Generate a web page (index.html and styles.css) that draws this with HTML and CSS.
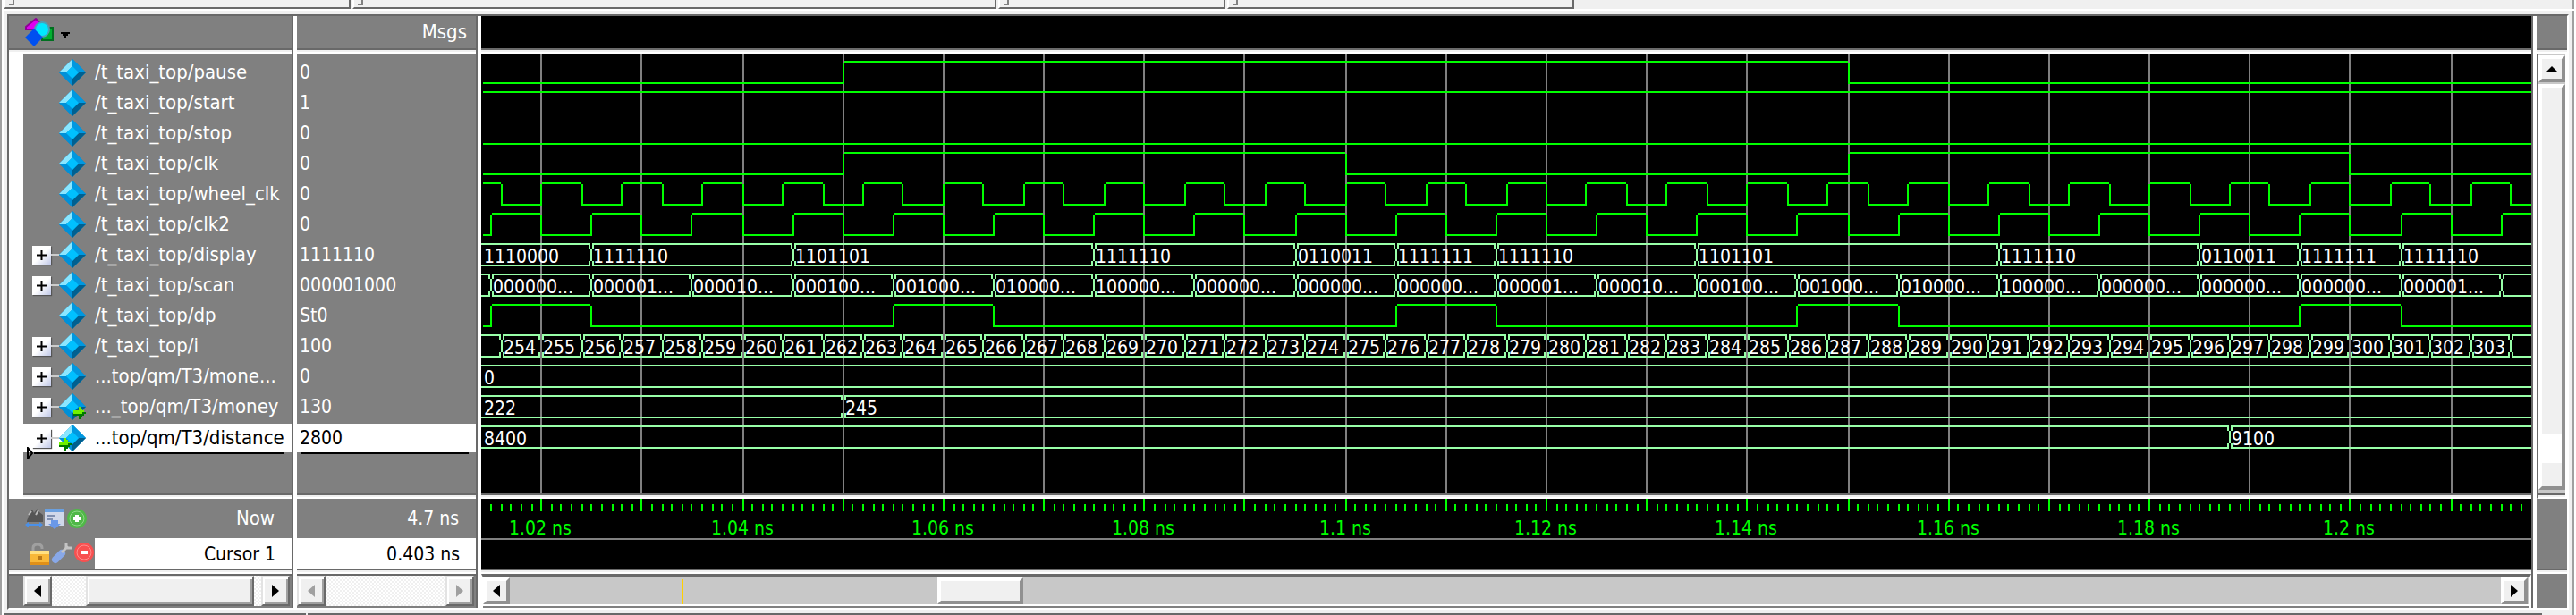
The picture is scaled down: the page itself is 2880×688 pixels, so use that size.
FILE: index.html
```html
<!DOCTYPE html>
<html lang="en">
<head>
<meta charset="utf-8">
<title>Wave</title>
<link rel="stylesheet" href="styles.css">
</head>
<body>
<svg class="defs" aria-hidden="true">
  <symbol id="diamond" viewBox="0 0 30 30">
    <path d="M15 0L30 15L15 30L0 15Z" fill="#0088cc"/>
    <path d="M15 0V8L8 15H0Z" fill="#8ae6ff"/>
    <path d="M15 0L30 15H22L15 8Z" fill="#0098e0"/>
    <path d="M0 15H8L15 22V30Z" fill="#0090d8"/>
    <path d="M30 15H22L15 22V30Z" fill="#006090"/>
    <path d="M15 8L22 15L15 22L8 15Z" fill="#00c0ff"/>
  </symbol>
  <symbol id="go" viewBox="0 0 14 14">
    <path d="M0 4H6V0H8V2H10V4H12V6H14V8H12V10H10V12H8V14H6V10H0Z" fill="#007800"/>
    <path d="M0 4H6V0H8V2H10V4H12V6H10V8H0Z" fill="#70f000"/>
  </symbol>
</svg>
<div class="toolbars">
  <div class="toolbar bar-a"><i class="grip"></i></div>
  <div class="toolbar bar-b"><i class="grip"></i></div>
  <div class="toolbar bar-c"><i class="grip"></i></div>
  <div class="toolbar bar-d"><i class="grip"></i></div>
</div>
<main class="wave-window">
  <section class="column names">
    <header class="head">
      <button class="menu" aria-label="Objects">
        <svg width="54" height="34" viewBox="0 0 54 34">
          <path d="M12 1L19 8V13H1V10Z" fill="#e000f0" stroke="#900098" stroke-width="2"/>
          <rect x="19" y="11" width="12" height="14" fill="#00b030" stroke="#007020" stroke-width="2"/>
          <circle cx="19" cy="13" r="8" fill="#00e8ff" stroke="#4aa0b8" stroke-width="2"/>
          <path d="M10 12L20 22L10 32L0 22Z" fill="#0050f0"/>
          <path d="M40 16H50V18H48V20H46V22H44V20H42V18H40Z" fill="#000"/>
        </svg>
      </button>
    </header>
    <div class="body" id="names"></div>
    <div class="times">
      <div class="now">
        <svg class="tools-now" width="70" height="24" viewBox="0 0 70 24">
          <path d="M2 15L5 6L8 2L10 6L14 1L16 5L20 8V16H2Z" fill="#555"/>
          <path d="M4 8L7 4M12 8L15 3" stroke="#bbb" stroke-width="2"/>
          <path d="M0 19L4 16V18H16V16L20 19L16 22V20H4V22Z" fill="#4a90e8"/>
          <rect x="22" y="1" width="22" height="19" fill="#d0d8ea"/>
          <rect x="22" y="1" width="22" height="4" fill="#6aa0e0"/>
          <path d="M25 9H33M25 13H31" stroke="#8090b0" stroke-width="2"/>
          <path d="M29 14H37V18H40L33 24L26 18H29Z" fill="#6a98e8"/>
          <circle cx="58" cy="12" r="11" fill="#50b848"/>
          <circle cx="58" cy="12" r="8" fill="none" stroke="#90d888" stroke-width="1"/>
          <path d="M56 8H60V10H62V14H60V16H56V14H54V10H56Z" fill="#fff"/>
        </svg>
        <span>Now</span>
      </div>
      <div class="cursor">
        <svg class="tools-cursor" width="80" height="34" viewBox="0 0 80 34">
          <path d="M11 15V11Q11 7 16 7T21 11V12" fill="none" stroke="#a0a0a0" stroke-width="3"/>
          <rect x="8" y="14" width="21" height="16" fill="#f8b838"/>
          <rect x="8" y="14" width="21" height="4" fill="#ffe080"/>
          <rect x="8" y="27" width="21" height="3" fill="#e09018"/>
          <rect x="16" y="20" width="5" height="5" fill="#b87818"/>
          <path d="M36 24L43 17" stroke="#88a8e8" stroke-width="8" stroke-linecap="round"/>
          <path d="M43 16L50 9M48 5V11H54" fill="none" stroke="#c4c4c4" stroke-width="3"/>
          <circle cx="68" cy="16" r="11" fill="#f85050"/>
          <circle cx="68" cy="16" r="8" fill="none" stroke="#ff8c8c" stroke-width="1"/>
          <rect x="64" y="14" width="8" height="4" fill="#fff"/>
        </svg>
        <span class="cursor-name">Cursor 1</span>
      </div>
    </div>
    <div class="scroll scroll-names">
      <button class="arrow" aria-label="Scroll left"><i class="tri left"></i></button>
      <div class="track"><div class="thumb thumb-names"></div></div>
      <button class="arrow" aria-label="Scroll right"><i class="tri right"></i></button>
    </div>
  </section>
  <section class="column values">
    <header class="head msgs">Msgs</header>
    <div class="body" id="values"></div>
    <div class="times">
      <div class="now"><span>4.7 ns</span></div>
      <div class="cursor"><span class="cursor-name">0.403 ns</span></div>
    </div>
    <div class="scroll scroll-values">
      <button class="arrow" aria-label="Scroll left" disabled><i class="tri left"></i></button>
      <div class="track"></div>
      <button class="arrow" aria-label="Scroll right" disabled><i class="tri right"></i></button>
    </div>
  </section>
  <section class="column waves">
    <header class="head"></header>
    <div class="body"><svg id="wave" class="plot"></svg></div>
    <div class="times">
      <svg id="ruler" class="plot ruler"></svg>
      <div class="cursor"></div>
    </div>
    <div class="hbar">
      <button class="hbtn" aria-label="Scroll left"><i class="tri left"></i></button>
      <div class="htrack"><i class="mark"></i><div class="hthumb"></div></div>
      <button class="hbtn" aria-label="Scroll right"><i class="tri right"></i></button>
    </div>
  </section>
  <section class="column side">
    <header class="head"></header>
    <div class="body vbar">
      <button class="vbtn" aria-label="Scroll up"><i class="tri up"></i></button>
      <div class="vthumb"><div class="band"></div></div>
    </div>
    <div class="times"></div>
    <div class="corner"></div>
  </section>
</main>
<footer class="status"><div class="status-a"></div><div class="status-b"></div></footer>
<script src="wave.js"></script>
</body>
</html>
```
FILE: styles.css
```css
* { box-sizing: border-box; }
html, body { height: 100%; }
body {
  margin: 0;
  display: flex;
  flex-direction: column;
  background: #f0f0f0;
  border-left: 2px solid #a0a0a0;
  border-right: 2px solid #fff;
  box-shadow: inset -2px 0 #a0a0a0, inset 2px 0 #fff;
  font-family: "DejaVu Sans Condensed", "Noto Sans", sans-serif;
  font-size: 21px;
  line-height: 34px;
  color: #fff;
  overflow: hidden;
}
button { font: inherit; padding: 0; margin: 0; border: 0; border-radius: 0; background: none; }
i { display: block; }
svg { display: block; flex: none; }
.defs { position: absolute; width: 0; height: 0; }

.toolbars { display: flex; gap: 2px; height: 12px; padding: 0 2px; border-bottom: 2px solid #fff; flex: none; }
.toolbar { border-left: 2px solid #fff; border-right: 2px solid #696969; border-bottom: 2px solid #696969; padding-left: 4px; }
.grip { width: 6px; height: 6px; border-right: 2px solid #808080; border-bottom: 2px solid #808080; }
.bar-a { width: 388px; }
.bar-b { width: 720px; }
.bar-c { width: 254px; }
.bar-d { width: 388px; }

.wave-window {
  flex: 1;
  min-height: 0;
  display: grid;
  grid-template-columns: 322px 206px 1fr 34px;
  margin: 4px 6px 4px 6px;
  border: 2px solid #fff;
  border-top-color: #696969;
  border-left-color: #696969;
  background: #808080;
}
.column { display: flex; flex-direction: column; min-width: 0; border-right: 4px solid #fff; box-shadow: inset -2px 0 #696969; padding-right: 2px; }
.side { border-right: 0; box-shadow: none; padding-right: 0; }
.head, .body, .times { border-bottom: 2px solid #fff; box-shadow: inset 0 -2px #f0f0f0, inset 0 -4px #696969; flex: none; }
.head { height: 42px; padding-bottom: 4px; }
.body { flex: 1; min-height: 0; padding-bottom: 4px; overflow: hidden; }
.times { height: 84px; padding-bottom: 4px; }
.menu { display: block; padding: 2px 0 0 18px; }
.names, .msgs { font-size: 22px; }
.msgs { text-align: right; padding-right: 10px; line-height: 36px; }

.names .body { border-left: 16px solid #fff; padding-top: 4px; }
.values .body { padding-top: 4px; }
.row { display: flex; align-items: center; height: 34px; white-space: nowrap; }
.row .tree { width: 30px; height: 22px; margin-left: 10px; display: flex; align-items: center; }
.plus {
  width: 21px; height: 21px; display: grid; place-items: center;
  background: linear-gradient(135deg, #fff 50%, #c0c8e8);
  box-shadow: 1px 1px 1px #555;
}
.wire { flex: 1; height: 2px; background: #ccc; }
.icon { position: relative; width: 30px; height: 30px; margin-right: 10px; flex: none; }
.badge { position: absolute; top: 15px; }
.badge.out { right: 0; }
.badge.in { left: 0; }
.selected { height: 32px; margin-top: 2px; background: #fff; color: #000; }
.drop { display: flex; align-items: center; height: 14px; margin: -6px 8px 0 4px; }
.drop svg { position: relative; }
.drop::after { content: ""; flex: 1; height: 2px; background: #000; }
.values .row { padding-left: 3px; }

.now { height: 44px; padding-right: 19px; display: flex; align-items: center; justify-content: flex-end; }
.tools-now { margin: 0 auto 0 18px; }
.tools-cursor { margin-left: 16px; }
.cursor { height: 34px; display: flex; }
.cursor-name { flex: 1; background: #fff; color: #000; font-size: 21px; text-align: right; padding-right: 18px; line-height: 36px; }

.scroll { display: flex; height: 38px; padding-right: 2px; border-top: 2px solid #696969; border-bottom: 2px solid #808080; flex: none; }
.scroll-names { padding-left: 16px; }
.arrow, .thumb {
  border: 2px solid #e3e3e3; border-right-color: #696969; border-bottom-color: #696969;
  box-shadow: inset 2px 2px #fff, inset -2px -2px #a0a0a0;
  background: #f0f0f0;
}
.arrow { width: 32px; display: grid; place-items: center; }
.track { flex: 1; background: repeating-conic-gradient(#fff 0 25%, #f0f0f0 0 50%) 0 0 / 4px 4px; }
.thumb-names { height: 100%; width: 188px; margin-left: 38px; }
.tri { width: 8px; height: 14px; background: #000; }
.tri.left { clip-path: polygon(100% 0, 100% 100%, 0 50%); }
.tri.right { clip-path: polygon(0 0, 0 100%, 100% 50%); }
.tri.up { width: 12px; height: 6px; clip-path: polygon(50% 0, 100% 100%, 0 100%); }
.arrow:disabled .tri { background: #a0a0a0; }

.waves { background: #000; }
.waves .body { padding-top: 0; }
.plot { width: 100%; height: 100%; }
.waves .ruler { height: 44px; }
.waves .cursor { border-top: 2px solid #808080; }
.hbar { display: flex; height: 38px; border: 2px solid #fff; border-top: 4px solid #696969; border-bottom: 0; background: #c8c8c8; box-shadow: inset 0 -2px #808080, inset 0 -4px #fff; padding: 0 2px 4px 0; flex: none; }
.hbtn, .hthumb, .vbtn, .vthumb {
  background: #f0f0f0;
  border: 4px solid #909090;
  border-top-color: #fff;
  border-left-color: #fff;
}
.hbtn { width: 30px; height: 30px; display: grid; place-items: center; }
.htrack { flex: 1; position: relative; }
.mark { position: absolute; left: 192px; top: 2px; bottom: 0; width: 2px; background: #ffd000; }
.hthumb { position: absolute; left: 478px; top: 0; width: 96px; height: 30px; }

.side .vbar { border-bottom: 2px solid #fff; padding: 2px 0 8px 0; background: #c8c8c8; border-left: 2px solid #696969; border-right: 2px solid #fff; display: flex; flex-direction: column; gap: 2px; }
.vbtn { height: 30px; display: grid; place-items: center; flex: none; }
.vthumb { flex: 1; display: flex; flex-direction: column; justify-content: flex-end; padding-bottom: 26px; }
.band { height: 32px; background: #fff; }
.corner { height: 38px; }

.status { display: flex; gap: 2px; height: 2px; padding-left: 2px; padding-right: 36px; flex: none; }
.status-a { width: 338px; background: #696969; }
.status-b { flex: 1; background: #696969; }

.wire-line { fill: #00ff00; }
.bus-line { fill: #98ffa8; }
.grid-line { fill: #808080; }
.plot text { fill: #fff; }
.plot .time { fill: #00ff00; text-anchor: middle; }
```
FILE: wave.js
```js
const ROW = 34;
const RIGHT = 6000;
const xAt = t => 2 * Math.round(33.2 + 5.618 * (t - 1020));

const toggles = (from, step, to = 1220) => {
  const out = [];
  for (let t = from; t <= to; t += step) out.push(t);
  return out;
};
const scanCodes = ['000000', '000001', '000010', '000100', '001000', '010000', '100000', '000000', '000000'];

const signals = [
  { name: '/t_taxi_top/pause', value: '0', level: 0, edges: [1050, 1150] },
  { name: '/t_taxi_top/start', value: '1', level: 1, edges: [] },
  { name: '/t_taxi_top/stop', value: '0', level: 0, edges: [] },
  { name: '/t_taxi_top/clk', value: '0', level: 0, edges: [1050, 1100, 1150, 1200] },
  { name: '/t_taxi_top/wheel_clk', value: '0', level: 1, edges: toggles(1016, 4, 1216) },
  { name: '/t_taxi_top/clk2', value: '0', level: 0, edges: toggles(1015, 5, 1215) },
  { name: '/t_taxi_top/display', value: '1111110', first: '1110000', bus: [
    [1025, '1111110'], [1045, '1101101'], [1075, '1111110'], [1095, '0110011'], [1105, '1111111'], [1115, '1111110'],
    [1135, '1101101'], [1165, '1111110'], [1185, '0110011'], [1195, '1111111'], [1205, '1111110']] },
  { name: '/t_taxi_top/scan', value: '000001000', first: '',
    bus: toggles(1015, 10, 1215).map((t, i) => [t, t < 1215 ? scanCodes[i % 9] + '...' : '']) },
  { name: '/t_taxi_top/dp', value: 'St0', level: 0, edges: [1015, 1025, 1055, 1065, 1105, 1115, 1145, 1155, 1195, 1205] },
  { name: '/t_taxi_top/i', value: '100', first: '',
    bus: toggles(1016, 4, 1216).map((t, i) => [t, t < 1216 ? String(254 + i) : '']) },
  { name: '...top/qm/T3/mone...', value: '0', first: '0', bus: [] },
  { name: '..._top/qm/T3/money', value: '130', first: '222', badge: 'out', bus: [[1050, '245']] },
  { name: '...top/qm/T3/distance', value: '2800', first: '8400', badge: 'in', selected: true, bus: [[1188, '9100']] }
];

const rect = (cls, x, y, w, h) => `<rect class="${cls}" x="${x}" y="${y}" width="${w}" height="${h}"/>`;
const marker = '<svg width="8" height="14" viewBox="0 0 8 14"><path d="M1 1L6 7L1 13Z" fill="none" stroke="#000" stroke-width="2"/></svg>';

document.getElementById('names').innerHTML = signals.map(s => {
  const tree = s.bus
    ? `<span class="tree"><button class="plus" aria-label="Expand ${s.name}"><svg width="11" height="11"><path d="M5.5 0V11M0 5.5H11" stroke="#000" stroke-width="2"/></svg></button><i class="wire"></i></span>`
    : '<span class="tree"></span>';
  const badge = s.badge ? `<svg class="badge ${s.badge}" width="14" height="14"><use href="#go"/></svg>` : '';
  return `<div class="row${s.selected ? ' selected' : ''}">${tree}<span class="icon"><svg width="30" height="30"><use href="#diamond"/></svg>${badge}</span><span>${s.name}</span></div>`;
}).join('') + `<div class="drop">${marker}</div>`;

document.getElementById('values').innerHTML = signals.map(s =>
  `<div class="row${s.selected ? ' selected' : ''}">${s.value}</div>`).join('') + '<div class="drop"></div>';

const crossings = [], lines = [], texts = [];
signals.forEach((s, row) => {
  const top = 8 + row * ROW;
  const bottom = top + 24;
  if (s.bus) {
    const starts = [[-2, s.first], ...s.bus];
    starts.forEach(([t, label], i) => {
      const x = i ? xAt(t) + 2 : 0;
      const end = i + 1 < starts.length ? xAt(starts[i + 1][0]) : RIGHT;
      lines.push(rect('bus-line', x, top, end - x, 2), rect('bus-line', x, bottom, end - x, 2));
      if (i) {
        for (const y of [top, bottom - 4]) crossings.push(rect('bus-line', x - 4, y, 2, 6), rect('bus-line', x, y, 2, 6));
        crossings.push(rect('bus-line', x - 2, top + 6, 2, 14));
      }
      if (label) texts.push(`<text x="${i ? x + 1 : 3}" y="${top + 22}">${label}</text>`);
    });
    return;
  }
  let level = s.level, x = 2;
  [...s.edges.map(xAt), RIGHT].forEach((edge, i, all) => {
    lines.push(level ? rect('wire-line', x + (i ? 2 : 0), top, edge - x - (i ? 2 : 0), 2) : rect('wire-line', x, bottom, edge - x + 2, 2));
    if (i < all.length - 1) lines.push(rect('wire-line', edge, top + 2, 2, 24));
    x = edge;
    level = 1 - level;
  });
});

const grid = [], ticks = [];
for (let t = 1015; t <= 1217; t++) {
  const major = t % 10 === 0;
  if (major) grid.push(rect('grid-line', xAt(t), 0, 2, 3000));
  ticks.push(rect('wire-line', xAt(t), major ? 0 : 6, 2, major ? 14 : 8));
  if (t % 20 === 0) ticks.push(`<text class="time" x="${xAt(t)}" y="40">${t / 1000} ns</text>`);
}
document.getElementById('wave').innerHTML = crossings.concat(grid, lines, texts).join('');
document.getElementById('ruler').innerHTML = ticks.join('');
```
